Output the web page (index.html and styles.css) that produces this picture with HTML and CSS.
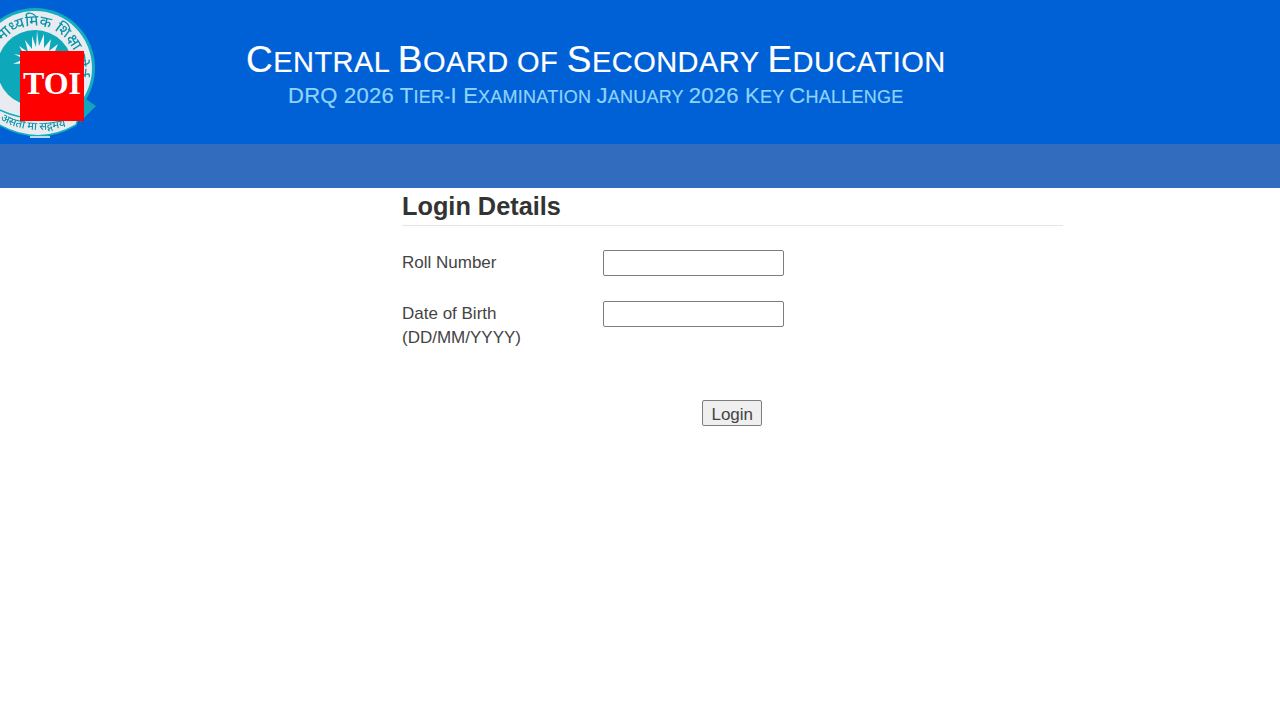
FILE: index.html
```html
<!DOCTYPE html>
<html lang="en">
<head>
<meta charset="utf-8">
<title>Login Details</title>
<link rel="stylesheet" href="styles.css">
</head>
<body>
<header class="banner">
  <div class="logo">
    <svg class="seal" width="100" height="140" viewBox="0 0 100 140" aria-hidden="true">
      <defs>
        <path id="arcTop" d="M-3 85.7 A 42 42 0 1 1 67 95"/>
        <path id="arcBottom" d="M0 120 Q 34 139 80 122"/>
      </defs>
      <path d="M80 95 L96 106 L80 122 Z" fill="#12a5bd"/>
      <circle cx="35" cy="68" r="60" fill="#13adc0"/>
      <circle cx="35" cy="68" r="57" fill="#e8ecf1"/>
      <circle cx="35" cy="68" r="38" fill="#0ea8bb"/>
      <path class="sun" d="M37 31 l2 15 5-12 0 14 7-9-2 12 9-7-5 12 10-3-8 8 12 0-54 3 11-5-10-5 11 2-6-10 9 6-3-12 7 9 0-13 4 11z"/>
      <path d="M-8 106 Q 34 130 82 108 L76 125 Q 36 148 -6 122 Z" fill="#e8ecf1" stroke="#13adc0" stroke-width="1.5"/>
      <rect x="30" y="136" width="20" height="2" fill="#b5dff0"/>
      <text class="seal-text"><textPath href="#arcTop" startOffset="10">केंद्रीय माध्यमिक शिक्षा बोर्ड</textPath></text>
      <text class="seal-motto"><textPath href="#arcBottom">असतो मा सद्गमय</textPath></text>
    </svg>
    <div class="toi">TOI</div>
  </div>
  <div class="titles">
    <h1 class="title"><span class="cap">C</span>entral <span class="cap">B</span>oard of <span class="cap">S</span>econdary <span class="cap">E</span>ducation</h1>
    <p class="subtitle"><span class="big">DRQ 2026 T</span>ier-<span class="big">I E</span>xamination <span class="big">J</span>anuary <span class="big">2026 K</span>ey <span class="big">C</span>hallenge</p>
  </div>
</header>
<nav class="navbar"></nav>
<main class="content">
  <h2 class="heading">Login Details</h2>
  <form class="form">
    <div class="row">
      <label class="label" for="roll">Roll Number</label>
      <input class="field" id="roll" type="text">
    </div>
    <div class="row">
      <label class="label" for="dob">Date of Birth<br>(DD/MM/YYYY)</label>
      <input class="field" id="dob" type="text">
    </div>
    <div class="actions">
      <button class="button" type="button">Login</button>
    </div>
  </form>
</main>
</body>
</html>
```
FILE: styles.css
```css
* { box-sizing: border-box; }
html, body { margin: 0; padding: 0; background: #fff; }
body { font-family: "Liberation Sans", Arial, sans-serif; color: #444; height: 720px; overflow: hidden; }
.banner { position: relative; height: 144px; background: #0060d6; overflow: hidden; }
.logo { position: absolute; left: 0; top: 0; width: 100px; height: 140px; }
.seal { display: block; filter: blur(0.4px); }
.sun { fill: #eef3f6; }
.seal-text { font-family: "Noto Sans", "DejaVu Sans", sans-serif; font-size: 15px; font-weight: 500; fill: #0a93a8; }
.seal-motto { font-family: "Noto Sans", "DejaVu Sans", sans-serif; font-size: 11px; font-weight: 500; fill: #0a93a8; }
.toi { position: absolute; left: 20px; top: 51px; width: 64px; height: 70px; background: #ff0000; color: #fff; font-family: "Liberation Serif", "Times New Roman", serif; font-weight: 700; font-size: 32px; line-height: 64px; text-align: center; }
.titles { padding: 40px 0 0 246px; }
.title { margin: 0; font-size: 29px; line-height: 40px; font-weight: 400; letter-spacing: 0.46px; text-transform: uppercase; color: #fff; white-space: nowrap; -webkit-text-stroke: 0.2px #fff; }
.cap { font-size: 37px; }
.subtitle { margin: 0; padding: 1px 0 0 42px; font-size: 18px; line-height: 26px; letter-spacing: 0.24px; text-transform: uppercase; color: #8fd3fb; white-space: nowrap; -webkit-text-stroke: 0.2px #8fd3fb; }
.big { font-size: 22px; }
.navbar { height: 44px; background: #326cbf; }
.content { width: 660.5px; margin-left: 402px; }
.heading { margin: 0; height: 38px; padding-top: 3px; font-size: 25.3px; line-height: 30px; font-weight: 700; color: #333; border-bottom: 1px solid #e5e5e5; }
.form { display: block; }
.row { display: flex; align-items: flex-start; }
.row:first-child { margin-top: 24px; height: 51px; }
.label { width: 201px; padding-top: 1px; font-size: 17px; line-height: 24px; color: #444; }
.field { width: 181px; height: 26px; margin: 0; padding: 1px 2px; background: #fff; border: 1px solid #7d7d7d; border-radius: 2px; }
.row + .row { height: 75px; }
.actions { display: flex; justify-content: center; padding-top: 24px; }
.button { width: 60px; height: 26px; margin: 0; padding: 4px 0 0; background: #efefef; border: 1px solid #7d7d7d; border-radius: 2px; font-family: inherit; font-size: 17px; color: #444; line-height: 20px; }
```
